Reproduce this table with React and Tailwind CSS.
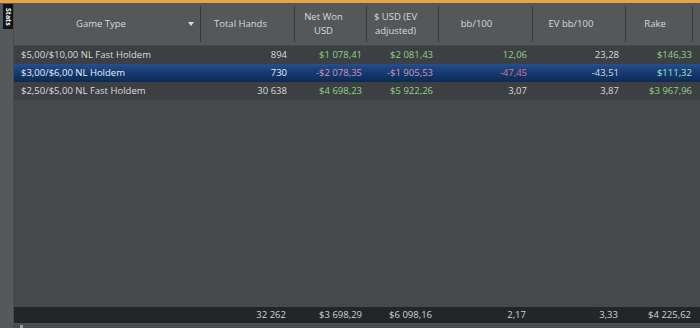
import React from 'react';

const cols = 'grid grid-cols-[187px_94px_72px_72px_94px_93px_67px_7px]';

const rows = [
  {
    game: '$5,00/$10,00 NL Fast Holdem',
    hands: '894',
    net: ['$1 078,41', 'g'],
    ev: ['$2 081,43', 'g'],
    bb: ['12,06', 'g'],
    evbb: ['23,28', 'w'],
    rake: ['$146,33', 'g'],
  },
  {
    game: '$3,00/$6,00 NL Holdem',
    hands: '730',
    net: ['-$2 078,35', 'r'],
    ev: ['-$1 905,53', 'r'],
    bb: ['-47,45', 'rr'],
    evbb: ['-43,51', 'w'],
    rake: ['$111,32', 'gs'],
    selected: true,
  },
  {
    game: '$2,50/$5,00 NL Fast Holdem',
    hands: '30 638',
    net: ['$4 698,23', 'g'],
    ev: ['$5 922,26', 'g'],
    bb: ['3,07', 'w'],
    evbb: ['3,87', 'w'],
    rake: ['$3 967,96', 'g'],
  },
];

const tone = {
  g: 'text-[#8fd086]',
  gs: 'text-[#a6e3c4]',
  w: 'text-[#d8dadc]',
  r: 'text-[#d592b8]',
  rr: 'text-[#e0708e]',
};

function HeadCell({ children, last, pad = 'pr-[14px]' }) {
  return (
    <div
      className={`my-[3px] flex items-center justify-center text-center leading-[14px] ${pad} ${
        last ? '' : 'border-r border-[#36393c]'
      }`}
    >
      {children}
    </div>
  );
}

function Row({ r }) {
  const bg = r.selected
    ? 'bg-gradient-to-b from-[#24508c] via-[#143a70] to-[#0c2a56] text-[#e6ecf4]'
    : 'bg-[#3d4043] text-[#d8dadc]';
  return (
    <div className={`${cols} h-[18px] items-center ${bg}`}>
      <div className="pl-[7px] truncate">{r.game}</div>
      <div className="text-right pr-[8px]">{r.hands}</div>
      <div className={`text-right pr-[5px] ${tone[r.net[1]]}`}>{r.net[0]}</div>
      <div className={`text-right pr-[6px] ${tone[r.ev[1]]}`}>{r.ev[0]}</div>
      <div className={`text-right pr-[6px] ${tone[r.bb[1]]}`}>{r.bb[0]}</div>
      <div className={`text-right pr-[7px] ${tone[r.evbb[1]]}`}>{r.evbb[0]}</div>
      <div className={`text-right pr-[1px] ${tone[r.rake[1]]}`}>{r.rake[0]}</div>
      <div />
    </div>
  );
}

export default function App() {
  return (
    <div
      className="w-[700px] h-[328px] flex flex-col bg-[#56595c] overflow-hidden text-[9.5px] text-[#d8dadc]"
      style={{ fontFamily: '"Open Sans", "Noto Sans", sans-serif' }}
    >
      <div className="h-[3px] bg-[#e9a440]" />
      <div className="flex flex-1 min-h-0">
        {/* side tab strip */}
        <div className="w-[14px] pt-[1px] pl-[3px] border-r border-[#4a4d50]">
          <div className="w-[10px] h-[25px] bg-[#121314] flex items-center justify-center">
            <span
              className="text-[7px] font-bold text-white leading-none"
              style={{ writingMode: 'vertical-rl' }}
            >
              Stats
            </span>
          </div>
        </div>

        <div className="flex-1 flex flex-col min-w-0">
          {/* header */}
          <div className={`${cols} h-[42px] bg-[#55585b] text-[#d6d8da]`}>
            <HeadCell pad="">
              <div className="flex items-center w-full">
                <span className="flex-1 text-center">Game Type</span>
                <svg width="6" height="4" viewBox="0 0 6 4" className="mr-[6px]">
                  <path d="M0 0 L6 0 L3 4 Z" fill="#d8dadc" />
                </svg>
              </div>
            </HeadCell>
            <HeadCell>Total Hands</HeadCell>
            <HeadCell>
              Net Won
              <br />
              USD
            </HeadCell>
            <HeadCell>
              $ USD (EV
              <br />
              adjusted)
            </HeadCell>
            <HeadCell pad="pr-[18px]">bb/100</HeadCell>
            <HeadCell pad="pr-[16px]">EV bb/100</HeadCell>
            <HeadCell pad="pr-[8px]">Rake</HeadCell>
            <HeadCell last pad="" />
          </div>

          {/* body */}
          <div className="flex-1 flex flex-col bg-[#46494c] pt-[1px]">
            {rows.map((r) => (
              <Row key={r.game} r={r} />
            ))}
          </div>

          {/* totals */}
          <div className={`${cols} h-[16px] items-center bg-[#232629] text-[#cfd1d3]`}>
            <div />
            <div className="text-right pr-[9px]">32 262</div>
            <div className="text-right pr-[5px]">$3 698,29</div>
            <div className="text-right pr-[7px]">$6 098,16</div>
            <div className="text-right pr-[7px]">2,17</div>
            <div className="text-right pr-[8px]">3,33</div>
            <div className="text-right pr-[2px]">$4 225,62</div>
            <div />
          </div>
          <div className="h-[5px] bg-[#4b4e51] pl-[6px] pt-[2px]">
            <div className="w-[3px] h-[3px] bg-[#9a9c9e]" />
          </div>
        </div>
      </div>
    </div>
  );
}
